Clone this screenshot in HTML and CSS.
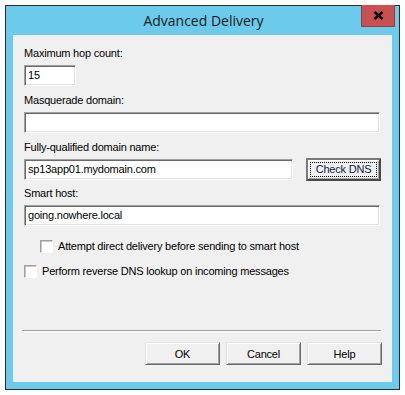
FILE: index.html
```html
<!DOCTYPE html>
<html lang="en">
<head>
    <meta charset="UTF-8">
    <title>Advanced Delivery</title>
    <link rel="stylesheet" href="styles.css">
</head>
<body>
    <div class="window">
        <div class="titlebar">
            <span class="title">Advanced Delivery</span>
            <div class="close">
                <svg width="11" height="9" viewBox="0 0 11 9"><path d="M1.5 1 L9.5 8 M9.5 1 L1.5 8" stroke="#000" stroke-width="2.4"/></svg>
            </div>
        </div>
        <div class="client">
            <label class="lbl first">Maximum hop count:</label>
            <div class="field short">15</div>

            <label class="lbl">Masquerade domain:</label>
            <div class="field wide"></div>

            <label class="lbl">Fully-qualified domain name:</label>
            <div class="row">
                <div class="field fqdn">sp13app01.mydomain.com</div>
                <button class="btn default"><span class="focus">Check DNS</span></button>
            </div>

            <label class="lbl after-row">Smart host:</label>
            <div class="field wide">going.nowhere.local</div>

            <div class="check indent"><span class="box"></span>Attempt direct delivery before sending to smart host</div>
            <div class="check"><span class="box"></span>Perform reverse DNS lookup on incoming messages</div>

            <div class="separator"></div>
            <div class="buttons">
                <button class="btn">OK</button>
                <button class="btn">Cancel</button>
                <button class="btn">Help</button>
            </div>
        </div>
    </div>
</body>
</html>
```

FILE: styles.css
```css
body {
    margin: 0;
    background: #ffffff;
}
.window {
    margin: 5px 0 0 5px;
    width: 393px;
    height: 383px;
    border: 1px solid #2b2b2b;
    background: #6ccbea;
    display: flex;
    flex-direction: column;
}
.titlebar {
    height: 29px;
    position: relative;
    display: flex;
    justify-content: center;
}
.title {
    font-family: "Open Sans", sans-serif;
    font-size: 14px;
    color: #1a1a1a;
    margin-top: 5px;
    margin-left: 2px;
}
.close {
    position: absolute;
    top: -1px;
    right: 4px;
    width: 32px;
    height: 21px;
    background: #c75050;
    border: 1px solid #9a3c3c;
    border-top: none;
    display: flex;
    align-items: center;
    justify-content: center;
}
.client {
    margin: 0 7px;
    height: 347px;
    background: #f0f0f0;
    font-family: "Liberation Sans", Arial, sans-serif;
    font-size: 11px;
    letter-spacing: -0.2px;
    color: #000;
    padding: 0 11px;
    display: flex;
    flex-direction: column;
    align-items: flex-start;
}
.lbl {
    display: block;
    height: 13px;
    line-height: 13px;
    margin-top: 8px;
    margin-bottom: 5px;
}
.lbl.first {
    margin-top: 12px;
}
.lbl.after-row {
    margin-top: 6px;
}
.field {
    box-sizing: border-box;
    height: 21px;
    background: #fff;
    border: 1px solid;
    border-color: #a0a0a0 #ffffff #ffffff #a0a0a0;
    box-shadow: inset 1px 1px #696969, inset -1px -1px #e3e3e3;
    padding: 0 0 0 3px;
    line-height: 19px;
    white-space: nowrap;
}
.short {
    width: 52px;
}
.wide {
    width: 356px;
}
.row {
    display: flex;
    gap: 13px;
    align-items: flex-start;
    margin-top: -1px;
}
.fqdn {
    width: 269px;
    margin-top: 1px;
}
.btn {
    box-sizing: border-box;
    width: 75px;
    height: 23px;
    font-family: "Liberation Sans", Arial, sans-serif;
    font-size: 11px;
    letter-spacing: -0.2px;
    color: #000;
    background: #f0f0f0;
    border: 1px solid;
    border-color: #e3e3e3 #696969 #696969 #e3e3e3;
    box-shadow: inset 1px 1px #ffffff, inset -1px -1px #a0a0a0;
    padding: 0;
}
.btn.default {
    border: 2px solid;
    border-color: #7a7a7a #4a4a4a #4a4a4a #7a7a7a;
    padding: 2px;
    display: flex;
}
.focus {
    flex: 1;
    border: 1px dotted #000;
    line-height: 13px;
    color: #0c1a4a;
}
.check {
    display: flex;
    align-items: center;
    height: 13px;
    line-height: 13px;
    margin-top: 14px;
}
.check + .check {
    margin-top: 12px;
}
.indent {
    margin-left: 16px;
}
.box {
    box-sizing: border-box;
    width: 13px;
    height: 13px;
    background: #fff;
    border: 1px solid;
    border-color: #a0a0a0 #ffffff #ffffff #a0a0a0;
    box-shadow: inset 1px 1px #c8c8c8;
    margin-right: 5px;
}
.separator {
    margin-top: 52px;
    margin-left: -2px;
    width: 359px;
    height: 1px;
    background: #a0a0a0;
    border-bottom: 1px solid #ffffff;
}
.buttons {
    align-self: flex-end;
    margin-right: -1px;
    margin-top: 10px;
    display: flex;
    gap: 6px;
}
```
